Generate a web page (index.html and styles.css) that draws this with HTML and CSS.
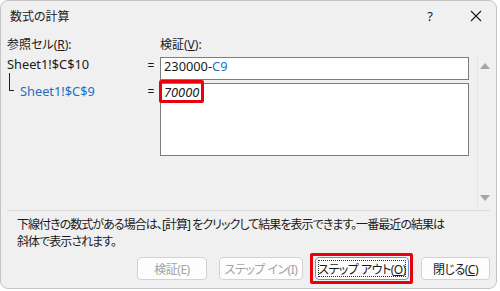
FILE: index.html
```html
<!DOCTYPE html>
<html lang="ja">
<head>
  <meta charset="UTF-8">
  <title>数式の計算</title>
  <link rel="stylesheet" href="styles.css">
</head>
<body>
  <div class="window">
    <div class="titlebar">
      <span class="title">数式の計算</span>
      <span class="help">?</span>
      <span class="close">
        <svg width="12" height="12" viewBox="0 0 12 12"><path d="M1 1L11 11M11 1L1 11" stroke="#1a1a1a" stroke-width="1.1" fill="none"/></svg>
      </span>
    </div>

    <div class="eval">
      <div class="label">参照セル(<u>R</u>):</div>
      <div></div>
      <div class="label">検証(<u>V</u>):</div>
      <div></div>

      <div class="ref">Sheet1!$C$10</div>
      <div class="eq">=</div>
      <div class="box">230000-<span class="blue">C9</span></div>
      <div class="scroll">
        <span class="arrow up"></span>
        <span class="arrow down"></span>
      </div>

      <div class="ref sub"><span class="tree"></span><span class="blue">Sheet1!$C$9</span></div>
      <div class="eq">=</div>
      <div class="box big"><i>70000</i><span class="mark value-mark"></span></div>
    </div>

    <div class="footer">
      <p class="note">下線付きの数式がある場合は、[計算] をクリックして結果を表示できます。一番最近の結果は<br>斜体で表示されます。</p>
      <div class="buttons">
        <button class="btn w70" disabled>検証(E)</button>
        <button class="btn w84" disabled>ステップ イン(I)</button>
        <button class="btn w93 focus">ステップ アウト(<u>O</u>)<span class="mark btn-mark"></span></button>
        <button class="btn w69">閉じる(<u>C</u>)</button>
      </div>
    </div>
  </div>
</body>
</html>
```

FILE: styles.css
```css
body {
  margin: 0;
  background: #ffffff;
  font-family: "Noto Sans", "Noto Sans CJK JP", sans-serif;
  font-size: 12px;
  font-feature-settings: "palt";
  color: #1a1a1a;
}
u { text-underline-offset: 1px; }

.window {
  width: 495px;
  height: 287px;
  background: #f0f0f0;
  border: 1px solid #c4c4c4;
  border-radius: 8px;
  overflow: hidden;
}

/* barre de titre */
.titlebar {
  height: 30px;
  display: flex;
  align-items: center;
  padding: 0 14px 0 9px;
}
.title { flex: 1; }
.help { margin-right: 37px; font-size: 13px; }
.close { display: flex; }

/* zone d'evaluation */
.eval {
  display: grid;
  grid-template-columns: 138px 15px 309px 23px;
  grid-template-rows: 20px 26px 73px 50px;
  padding: 6px 0 0 6px;
  position: relative;
}
.label { line-height: 16px; }
.ref { line-height: 14px; font-size: 12.8px; }
.sub { display: flex; align-items: flex-start; line-height: 16px; }
.tree {
  display: inline-block;
  width: 4px;
  height: 17px;
  margin: -10px 6px 0 2px;
  border-left: 1px solid #222;
  border-bottom: 1px solid #222;
}
.eq { text-align: center; line-height: 18px; padding-right: 3px; }
.blue { color: #1f6fc5; }

.box {
  height: 21px;
  background: #fff;
  border: 1px solid #7c7c7c;
  padding: 0 3px;
  line-height: 17px;
  font-size: 12.8px;
  position: relative;
}
.big { height: 71px; }

.scroll {
  grid-column: 4;
  grid-row: 2 / 5;
  margin-left: 8px;
  border-left: 1px solid #e4e4e4;
  display: flex;
  flex-direction: column;
  justify-content: space-between;
  align-items: center;
  padding: 6px 0 5px;
}
.arrow {
  width: 0;
  height: 0;
  border-left: 5px solid transparent;
  border-right: 5px solid transparent;
}
.up { border-bottom: 6px solid #a6a6a6; }
.down { border-top: 6px solid #a6a6a6; }

/* surlignage rouge */
.mark {
  position: absolute;
  border: 3px solid #e8000b;
  border-radius: 2px;
}
.value-mark { left: -2px; top: -4px; width: 39px; height: 17px; }
.btn-mark { left: -6px; top: -5px; right: -5px; bottom: -5px; }

/* bas */
.footer {
  margin: 4px 6px 0 6px;
  border-top: 1px solid #dcdcdc;
}
.note {
  margin: 5px 0 0 10px;
  line-height: 17px;
  letter-spacing: -0.95px;
}
.buttons {
  display: flex;
  justify-content: flex-end;
  gap: 12px;
  margin-top: 7px;
}
.btn {
  position: relative;
  height: 23px;
  padding: 0;
  background: #fdfdfd;
  border: 1px solid #d2d2d2;
  border-radius: 4px;
  font-family: inherit;
  font-size: 12px;
  font-feature-settings: "palt";
  letter-spacing: -0.5px;
  white-space: nowrap;
  color: #1a1a1a;
}
.btn:disabled { color: #a3a3a3; }
.focus { border-color: #5a9bd8; }
.focus::after {
  content: "";
  position: absolute;
  inset: 2px;
  border: 1px dotted #333;
}
.w70 { width: 70px; }
.w84 { width: 84px; }
.w93 { width: 94px; }
.w69 { width: 69px; }
```
